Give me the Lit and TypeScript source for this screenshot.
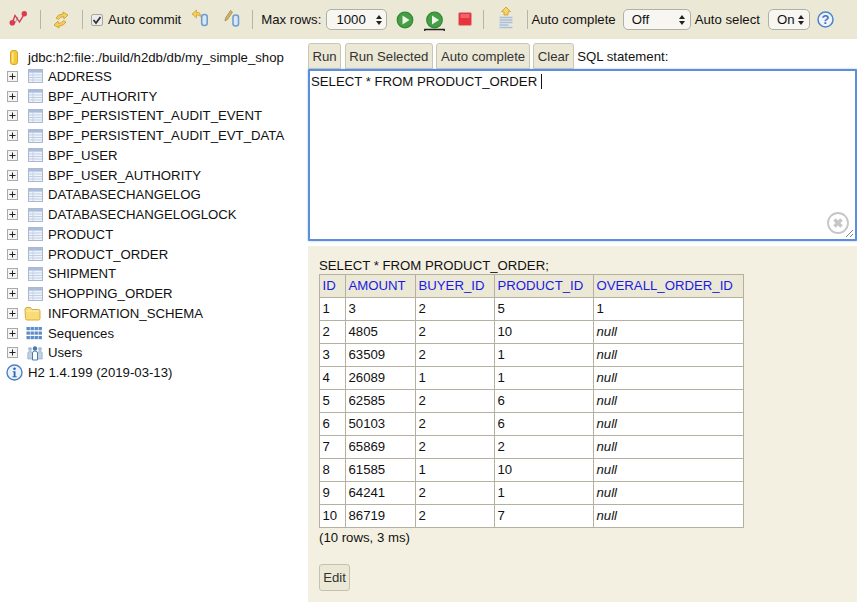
import { LitElement, html, css, svg } from "lit";
import { customElement } from "lit/decorators.js";

const tableIcon = svg`<svg class="ti" width="15" height="14" viewBox="0 0 15 14"><rect x=".5" y=".5" width="14" height="13" fill="#eef3fa" stroke="#a9b8d3"/><rect x="1" y="1" width="13" height="2.6" fill="#a9bcdc"/><path d="M1 6h13M1 8.500h13M1 11h13M5 3.500V13" stroke="#c3d0e4" stroke-width="1"/></svg>`;
const plus = svg`<svg class="pl" width="11" height="11" viewBox="0 0 11 11"><rect x=".5" y=".5" width="10" height="10" fill="#f4f4f4" stroke="#aaa"/><path d="M2.500 5.500h6M5.500 2.500v6" stroke="#222"/></svg>`;
const folder = svg`<svg class="ti tf" width="17" height="15" viewBox="0 0 17 15"><path d="M1 3.500Q1 1.500 3 1.500h3.500l1.500 2h6.500q1.500 0 1.500 1.500v7.500q0 1.500-1.500 1.500h-11.500q-1.500 0-1.500-1.500z" fill="#f8dc78" stroke="#d9a93c"/><path d="M2 5h13" stroke="#fdf0b8"/></svg>`;
const seq = svg`<svg class="ti ts" width="17" height="14" viewBox="0 0 17 14">${[1, 5.500, 10].map((y) => [0.5, 4.5, 8.500, 12.500].map((x) => svg`<rect x=${x} y=${y} width="3.400" height="3.200" fill="#5d8ec8"/>`))}</svg>`;
const users = svg`<svg class="ti tu" width="16" height="16" viewBox="0 0 16 16"><circle cx="3" cy="4" r="2" fill="#a9c0dc"/><circle cx="13" cy="4" r="2" fill="#a9c0dc"/><path d="M.8 14V8q0-1.500 2.200-1.500T5.500 8v6zM10.500 14V8q0-1.500 2.500-1.500T15.200 8v6z" fill="#bfd1e6" stroke="#7f9fc4" stroke-width=".6"/><circle cx="8" cy="3.500" r="2.200" fill="#4d78ad"/><path d="M5.500 15V8q0-2 2.500-2t2.500 2v7z" fill="#fff" stroke="#4d78ad"/></svg>`;
const db = svg`<svg width="8" height="15" viewBox="0 0 8 15"><rect x=".5" y=".5" width="7" height="14" rx="2.500" fill="#f4c93c" stroke="#d8a72a"/><rect x="2" y="2.500" width="1.500" height="10" fill="#fbe88f"/></svg>`;
const info = svg`<svg width="17" height="17" viewBox="0 0 17 17"><circle cx="8.500" cy="8.500" r="7.500" fill="#eaf2fb" stroke="#4e82bd" stroke-width="1.400"/><circle cx="8.500" cy="4.800" r="1.300" fill="#2f68a8"/><path d="M6.800 7.200h2.700v5h1.200v1H6.500v-1h1.200v-4h-.9z" fill="#2f68a8"/></svg>`;

const disconnect = svg`<svg width="20" height="20" viewBox="0 0 20 20"><path d="M4.300 12.800L7 5.500 11.500 12 16.300 3.800" fill="none" stroke="#d9344e" stroke-width="1.300"/><path d="M7 13l3-6" stroke="#777" stroke-width=".7"/><circle cx="4.300" cy="12.800" r="2.800" fill="#e0394f"/><circle cx="16.300" cy="3.800" r="2.700" fill="#e0394f"/></svg>`;
const refresh = svg`<svg width="20" height="20" viewBox="0 0 20 20"><path d="M12 2l5 3-4 4-.5-2.500q-4 .5-5 3L5 8q2-4 7-4z" fill="#f3cf5a" stroke="#c99b2b" stroke-width=".8"/><path d="M8 18l-5-3 4-4 .5 2.500q4-.5 5-3l2.500 1.500q-2 4-7 4z" fill="#f3cf5a" stroke="#c99b2b" stroke-width=".8"/></svg>`;
const rollback = svg`<svg width="20" height="18" viewBox="0 0 20 18"><path d="M3 5L7.500 1v2.500h2q2 0 2 4-1.500-1.500-3-1.500h-1v3z" fill="#f3cf5a" stroke="#c99b2b" stroke-width=".7"/><rect x="12.700" y="5.500" width="5.500" height="11" rx="2.500" fill="#dbe7f4" stroke="#6f9fd0" stroke-width="1.600"/></svg>`;
const commit = svg`<svg width="20" height="18" viewBox="0 0 20 18"><path d="M3.500 9L8.500 1.500l2 1.500-5 7.500-2.500 1.500z" fill="#d9b35a" stroke="#8a7548" stroke-width=".6"/><rect x="11" y="6" width="5.500" height="11" rx="2.500" fill="#dbe7f4" stroke="#6f9fd0" stroke-width="1.600"/></svg>`;
const play = svg`<svg width="18" height="18" viewBox="0 0 18 18"><circle cx="9" cy="9" r="7.800" fill="#469f45" stroke="#2f8a35" stroke-width="1.200"/><path d="M6.500 4.500L13.500 9 6.500 13.500z" fill="#eef6e8"/></svg>`;
const playSel = svg`<svg width="21" height="21" viewBox="0 0 21 21"><circle cx="10.500" cy="9" r="7.800" fill="#469f45" stroke="#2f8a35" stroke-width="1.200"/><path d="M8 4.500L15 9 8 13.500z" fill="#eef6e8"/><path d="M.8 20V18.500H20.200V20" fill="none" stroke="#222" stroke-width="1.400"/></svg>`;
const stop = svg`<svg width="14" height="14" viewBox="0 0 14 14"><rect x=".5" y=".5" width="13" height="13" rx="1.500" fill="#e8323c" stroke="#d99"/><rect x="2.500" y="2" width="9" height="4" fill="#f2626a"/></svg>`;
const history = svg`<svg width="18" height="24" viewBox="0 0 18 24"><path d="M2.500 11.500h13M2.500 14h13M2.500 16.500h13M2.500 19h9M2.500 21.500h13" stroke="#a6bfe0" stroke-width="1.400"/><path d="M9 1L13.500 5.500 11 6v3H7V6L4.500 5.500z" fill="#f5d36a" stroke="#c99b2b" stroke-width=".8"/></svg>`;
const help = svg`<svg width="17" height="17" viewBox="0 0 17 17"><circle cx="8.500" cy="8.500" r="7.500" fill="#f1f5fb" stroke="#4f84cc" stroke-width="1.500"/><text x="8.500" y="13" text-anchor="middle" class="q">?</text></svg>`;
const clearIc = svg`<svg width="22" height="22" viewBox="0 0 22 22"><circle cx="11" cy="11" r="10" fill="#fff" stroke="#c6c6c6" stroke-width="1.800"/><path d="M7.500 7.500l7 7M14.500 7.500l-7 7" stroke="#c6c6c6" stroke-width="3.400"/></svg>`;

const tree: [unknown, string][] = [
  ["t", "ADDRESS"], ["t", "BPF_AUTHORITY"], ["t", "BPF_PERSISTENT_AUDIT_EVENT"], ["t", "BPF_PERSISTENT_AUDIT_EVT_DATA"],
  ["t", "BPF_USER"], ["t", "BPF_USER_AUTHORITY"], ["t", "DATABASECHANGELOG"], ["t", "DATABASECHANGELOGLOCK"],
  ["t", "PRODUCT"], ["t", "PRODUCT_ORDER"], ["t", "SHIPMENT"], ["t", "SHOPPING_ORDER"],
  [folder, "INFORMATION_SCHEMA"], [seq, "Sequences"], [users, "Users"],
];
const rows: (string | null)[][] = [
  ["1", "3", "2", "5", "1"], ["2", "4805", "2", "10", null], ["3", "63509", "2", "1", null], ["4", "26089", "1", "1", null],
  ["5", "62585", "2", "6", null], ["6", "50103", "2", "6", null], ["7", "65869", "2", "2", null], ["8", "61585", "1", "10", null],
  ["9", "64241", "2", "1", null], ["10", "86719", "2", "7", null],
];

@customElement("app-root")
export class AppRoot extends LitElement {
  static styles = css`
    :host { display: block; width: 857px; height: 602px; overflow: hidden; font-family: "Liberation Sans", Arial, sans-serif; font-size: 13.2px; color: #111; background: #fff; }
    .toolbar { height: 39px; background: #ece8d6; display: flex; align-items: center; white-space: nowrap; }
    .slot { display: flex; align-items: center; justify-content: center; flex: none; }
    .s1 { width: 20px; margin-left: 8px; }
    .sep { width: 1px; height: 19px; background: #b5b5ad; flex: none; }
    .sp1 { margin-left: 12px; }
    .s2 { width: 20px; margin-left: 10px; }
    .sp2 { margin-left: 11px; }
    .cb { width: 12px; height: 12px; margin-left: 8px; flex: none; border: 1px solid #a5a5a5; border-radius: 2px; background: #ececec; box-sizing: border-box; display: flex; align-items: center; justify-content: center; }
    .lab1 { margin-left: 5px; }
    .s3 { width: 20px; margin-left: 8px; margin-top: -3px; }
    .s4 { width: 20px; margin-left: 13px; margin-top: -3px; }
    .sp3 { margin-left: 10px; }
    .lab2 { margin-left: 8px; }
    .sel { box-sizing: border-box; height: 21px; border: 1px solid #b0b0a8; border-radius: 5px; background: #f7f6f1; display: flex; align-items: center; justify-content: space-between; flex: none; }
    .sel1 { width: 61px; margin-left: 5px; padding: 0 3px 0 9px; }
    .s5 { width: 18px; margin-left: 9px; }
    .s6 { width: 21px; margin-left: 10px; margin-top: 3px; }
    .s7 { width: 14px; margin-left: 13px; margin-top: -2px; }
    .sp4 { margin-left: 11px; }
    .s8 { width: 18px; margin-left: 13px; margin-top: -3px; }
    .sp5 { margin-left: 12px; }
    .lab3 { margin-left: 3px; }
    .sel2 { width: 68px; margin-left: 7px; padding: 0 3px 0 8px; }
    .lab4 { margin-left: 4px; }
    .sel3 { width: 42px; margin-left: 8px; padding: 0 3px 0 8px; }
    .s9 { width: 17px; margin-left: 7px; }
    .q { font: bold 13px "Liberation Sans", sans-serif; fill: #3f78c4; }
    .arr { display: flex; flex-direction: column; gap: 2px; align-items: center; width: 9px; }
    .up { width: 0; height: 0; border: 3.500px solid transparent; border-top: 0; border-bottom: 4px solid #222; }
    .dn { width: 0; height: 0; border: 3.500px solid transparent; border-bottom: 0; border-top: 4px solid #222; }
    .main { display: grid; grid-template-columns: 308px 549px; height: 563px; }
    .side { padding: 9px 0 0 0; }
    .row { height: 19.750px; display: flex; align-items: center; white-space: nowrap; }
    .pl { margin-left: 7px; flex: none; }
    .ti { margin-left: 10px; flex: none; }
    .tf { margin-left: 6px; }
    .ts { margin-left: 8px; }
    .tu { margin-left: 9px; }
    .name { margin-left: 5px; }
    .tf + .name { margin-left: 7px; }
    .rootrow { padding-left: 10px; gap: 10px; height: 18.600px; }
    .inforow { padding-left: 6px; gap: 5px; height: 20px; }
    .rootrow .name, .inforow .name { margin-left: 0; }
    .right { display: flex; flex-direction: column; }
    .query { height: 207px; padding: 4px 0 0 0; box-sizing: border-box; background: #fff; }
    .btns { display: flex; align-items: stretch; gap: 3.500px; height: 26px; }
    .btn { box-sizing: border-box; border: 1px solid #c9c6b4; border-radius: 3px 3px 0 0; background: #ece8d6; display: flex; align-items: center; padding: 0 3.500px; color: #333; }
    .btn-label { display: flex; align-items: center; }
    .sql { box-sizing: border-box; height: 172px; border: 2px solid #5b8fdb; border-radius: 1px; padding: 3px 1px; position: relative; box-shadow: 0 0 2px #8fb4ea; background: #fff; }
    .caret { display: inline-block; width: 1px; height: 15px; background: #111; vertical-align: -3px; margin-left: 4px; }
    .clr { position: absolute; right: 6px; bottom: 5px; display: flex; }
    .grip { position: absolute; right: 1px; bottom: 1px; display: flex; }
    .result { flex: 1; background: #f4f0e1; padding: 12px 0 0 11px; display: flex; flex-direction: column; align-items: flex-start; }
    .title { height: 15px; line-height: 15px; margin-bottom: 1px; }
    table { border-collapse: collapse; table-layout: fixed; width: 424px; background: #fff; }
    th, td { border: 1px solid #b5b0a0; padding: 0 0 0 2.500px; text-align: left; font-weight: normal; box-sizing: border-box; line-height: 16px; height: 23px; }
    th { background: #ece8d6; color: #1a1ae6; }
    .c1 { width: 26px; } .c2 { width: 70px; } .c3 { width: 79px; } .c4 { width: 99px; } .c5 { width: 150px; }
    .null { font-style: italic; }
    .meta { margin-top: 1px; height: 17px; line-height: 17px; }
    .edit { box-sizing: border-box; margin-top: 18px; height: 27px; width: 31px; border: 1px solid #c4c1ae; border-radius: 3px; background: #ece8d6; display: flex; align-items: center; justify-content: center; color: #333; }
  `;

  private arrows() {
    return html`<span class="arr"><span class="up"></span><span class="dn"></span></span>`;
  }

  render() {
    return html`
      <div class="toolbar">
        <span class="slot s1">${disconnect}</span><span class="sep sp1"></span>
        <span class="slot s2">${refresh}</span><span class="sep sp2"></span>
        <span class="cb"><svg width="10" height="10" viewBox="0 0 10 10"><path d="M1.500 5l2.500 3 4.500-6" fill="none" stroke="#333" stroke-width="1.800"/></svg></span>
        <span class="lab1">Auto commit</span>
        <span class="slot s3">${rollback}</span><span class="slot s4">${commit}</span><span class="sep sp3"></span>
        <span class="lab2">Max rows:</span>
        <span class="sel sel1"><span>1000</span>${this.arrows()}</span>
        <span class="slot s5">${play}</span><span class="slot s6">${playSel}</span><span class="slot s7">${stop}</span><span class="sep sp4"></span>
        <span class="slot s8">${history}</span><span class="sep sp5"></span>
        <span class="lab3">Auto complete</span>
        <span class="sel sel2"><span>Off</span>${this.arrows()}</span>
        <span class="lab4">Auto select</span>
        <span class="sel sel3"><span>On</span>${this.arrows()}</span>
        <span class="slot s9">${help}</span>
      </div>
      <div class="main">
        <div class="side">
          <div class="row rootrow">${db}<span class="name">jdbc:h2:file:./build/h2db/db/my_simple_shop</span></div>
          ${tree.map(([ic, n]) => html`<div class="row">${plus}${ic === "t" ? tableIcon : ic}<span class="name">${n}</span></div>`)}
          <div class="row inforow">${info}<span class="name">H2 1.4.199 (2019-03-13)</span></div>
        </div>
        <div class="right">
          <div class="query">
            <div class="btns">
              <span class="btn">Run</span><span class="btn">Run Selected</span><span class="btn">Auto complete</span><span class="btn">Clear</span>
              <span class="btn-label">SQL statement:</span>
            </div>
            <div class="sql">SELECT * FROM PRODUCT_ORDER<span class="caret"></span>
              <span class="clr">${clearIc}</span>
              <span class="grip"><svg width="9" height="9" viewBox="0 0 9 9"><path d="M1 8l7-7M5 8l3-3" stroke="#777" stroke-width=".9"/></svg></span>
            </div>
          </div>
          <div class="result">
            <div class="title">SELECT * FROM PRODUCT_ORDER;</div>
            <table>
              <thead><tr><th class="c1">ID</th><th class="c2">AMOUNT</th><th class="c3">BUYER_ID</th><th class="c4">PRODUCT_ID</th><th class="c5">OVERALL_ORDER_ID</th></tr></thead>
              <tbody>${rows.map((r) => html`<tr>${r.map((c) => (c === null ? html`<td class="null">null</td>` : html`<td>${c}</td>`))}</tr>`)}</tbody>
            </table>
            <div class="meta">(10 rows, 3 ms)</div>
            <div class="edit">Edit</div>
          </div>
        </div>
      </div>
    `;
  }
}
